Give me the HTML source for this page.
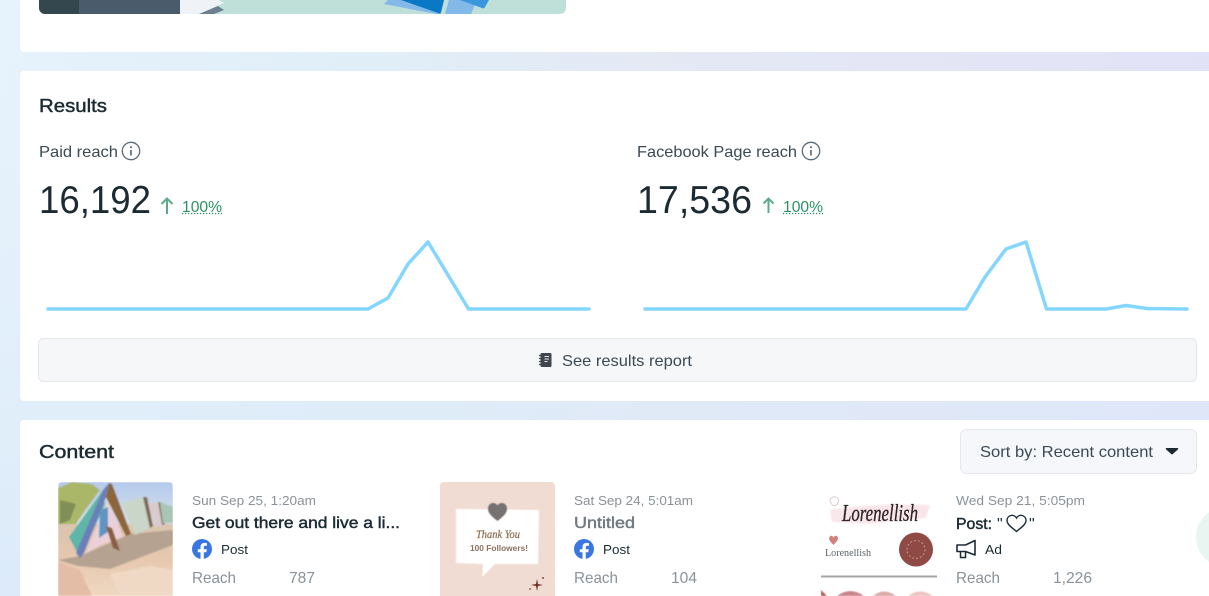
<!DOCTYPE html>
<html lang="en">
<head>
<meta charset="utf-8">
<title>Results</title>
<style>
html,body{margin:0;padding:0;width:1209px;height:596px;overflow:hidden;background:#e4eef8}
svg{display:block;position:absolute;left:0;top:0}
text{font-family:"Liberation Sans",sans-serif;fill:#1c2b33}
.semi{stroke:#1c2b33;stroke-width:.45px}
.g{fill:#8a9299}
.b{fill:#3a4a55}
</style>
</head>
<body>
<svg width="1209" height="596" viewBox="0 0 1209 596" xmlns="http://www.w3.org/2000/svg">
<defs>
<linearGradient id="bg" x1="0" y1="0" x2="1209" y2="0" gradientUnits="userSpaceOnUse">
<stop offset="0" stop-color="#e6f2fc"/><stop offset=".3" stop-color="#e0eef7"/><stop offset=".55" stop-color="#e5e8f4"/><stop offset="1" stop-color="#e2e1f6"/>
</linearGradient>
<linearGradient id="bg2" x1="0" y1="0" x2="0" y2="596" gradientUnits="userSpaceOnUse">
<stop offset="0" stop-color="#e3f2f8" stop-opacity="0"/><stop offset="1" stop-color="#d9e8fa" stop-opacity=".8"/>
</linearGradient>
<linearGradient id="sky" x1="0" y1="0" x2="0" y2="1"><stop offset="0" stop-color="#b4caec"/><stop offset="1" stop-color="#dfe3e6"/></linearGradient>
<linearGradient id="sand" x1="0" y1="0" x2="0" y2="1"><stop offset="0" stop-color="#d9c4ae"/><stop offset=".5" stop-color="#e6c8ae"/><stop offset="1" stop-color="#f0d8c2"/></linearGradient>
<filter id="b1" x="-5%" y="-5%" width="110%" height="110%"><feGaussianBlur stdDeviation=".9"/></filter>
<filter id="b2" x="-5%" y="-5%" width="110%" height="110%"><feGaussianBlur stdDeviation=".4"/></filter>
<clipPath id="c1"><path d="M62 482H169a4 4 0 0 1 4 4V596H58V486a4 4 0 0 1 4-4z"/></clipPath>
<clipPath id="c2"><path d="M444 482H551a4 4 0 0 1 4 4V596H440V486a4 4 0 0 1 4-4z"/></clipPath>
<clipPath id="c0"><path d="M39 -10H566V8a6 6 0 0 1-6 6H45a6 6 0 0 1-6-6z"/></clipPath>
</defs>
<rect width="1209" height="596" fill="url(#bg)"/>
<rect width="1209" height="596" fill="url(#bg2)"/>

<!-- cards -->
<path d="M20 -10H1209V52H24a4 4 0 0 1-4-4z" fill="#fff"/>
<path d="M24 71H1209V401H24a4 4 0 0 1-4-4V75a4 4 0 0 1 4-4z" fill="#fff"/>
<path d="M24 420H1209V596H20V424a4 4 0 0 1 4-4z" fill="#fff"/>

<!-- banner -->
<g clip-path="url(#c0)">
<rect x="39" y="-10" width="527" height="24" fill="#bfe0d9"/>
<rect x="39" y="-10" width="40" height="24" fill="#34474f"/>
<rect x="79" y="-10" width="101" height="24" fill="#4a5b6c"/>
<path d="M180 0H219L224 3 199 14H180z" fill="#eff3f7"/>
<path d="M199 14L218 6 224 10 214 14z" fill="#6f7f8f"/>
<path d="M388 0L384 4 436 14H441L444 0z" fill="#82b9e8"/>
<path d="M449 0H477L471 14H445z" fill="#82b9e8"/>
<path d="M401 0L438 13a2 2 0 0 0 3-1L444 0z" fill="#0a78c4"/>
<path d="M460 0H489L485 7a2 2 0 0 1-3 1z" fill="#3a97dc"/>
</g>

<!-- Results -->
<text x="39" y="112" font-size="18" class="semi" textLength="68" lengthAdjust="spacingAndGlyphs">Results</text>
<text x="39" y="157" font-size="16" class="b" textLength="79" lengthAdjust="spacingAndGlyphs">Paid reach</text>
<circle cx="131" cy="151" r="8.7" fill="none" stroke="#5b6b78" stroke-width="1.3"/>
<rect x="130.2" y="150" width="1.5" height="5.5" fill="#4a5a66"/><circle cx="131" cy="147.3" r="1" fill="#4a5a66"/>
<text x="39" y="213" font-size="39" textLength="112" lengthAdjust="spacingAndGlyphs">16,192</text>
<path d="M167 214V199M161.500 204L167 198.500 172.500 204" fill="none" stroke="#5aab8b" stroke-width="2"/>
<text x="182" y="212" font-size="16" style="fill:#2a9163" textLength="40" lengthAdjust="spacingAndGlyphs">100%</text>
<line x1="182" y1="213.500" x2="222" y2="213.500" stroke="#2a9163" stroke-width="1.300" stroke-dasharray="1.300 1.700"/>

<text x="637" y="157" font-size="16" class="b" textLength="160" lengthAdjust="spacingAndGlyphs">Facebook Page reach</text>
<circle cx="811" cy="151" r="8.700" fill="none" stroke="#5b6b78" stroke-width="1.300"/>
<rect x="810.200" y="150" width="1.500" height="5.500" fill="#4a5a66"/><circle cx="811" cy="147.300" r="1" fill="#4a5a66"/>
<text x="637" y="213" font-size="39" textLength="115" lengthAdjust="spacingAndGlyphs">17,536</text>
<path d="M768.500 213V198.500M763.500 203.500L768.500 198.500 773.500 203.500" fill="none" stroke="#5aab8b" stroke-width="2"/>
<text x="783" y="212" font-size="16" style="fill:#2a9163" textLength="40" lengthAdjust="spacingAndGlyphs">100%</text>
<line x1="783" y1="213.500" x2="823" y2="213.500" stroke="#2a9163" stroke-width="1.300" stroke-dasharray="1.300 1.700"/>

<!-- charts -->
<polyline points="48,309 368,309 388,298 408,264 428,242 468.500,309 589,309" fill="none" stroke="#85d6ff" stroke-width="3.500" stroke-linecap="round" stroke-linejoin="round"/>
<polyline points="645,309 966,309 985,277 1006,249 1026,242 1046.500,309 1106,309 1126,305.500 1147,308.500 1187,309" fill="none" stroke="#85d6ff" stroke-width="3.500" stroke-linecap="round" stroke-linejoin="round"/>

<!-- report button -->
<rect x="38.500" y="338.500" width="1158" height="43" rx="5" fill="#f6f7f9" stroke="#e3e6ea"/>
<rect x="540.500" y="353" width="11" height="14" rx="1.500" fill="#3f4650"/>
<path d="M539 355.500h3M539 358.500h3M539 361.500h3M539 364.500h3" stroke="#3f4650" stroke-width="1.200"/>
<path d="M544.500 356.500h4.500M544.500 359h4.500M544.500 361.500h3" stroke="#e8eaee" stroke-width=".9"/>
<text x="562" y="366" font-size="16" class="b" textLength="130" lengthAdjust="spacingAndGlyphs">See results report</text>

<!-- Content -->
<text x="39" y="458" font-size="18" class="semi" textLength="75" lengthAdjust="spacingAndGlyphs">Content</text>
<rect x="960.500" y="429.500" width="236" height="44" rx="6" fill="#f5f7fa" stroke="#e4e7eb"/>
<text x="980" y="457" font-size="16" class="b" textLength="173" lengthAdjust="spacingAndGlyphs">Sort by: Recent content</text>
<path d="M1165.500 448h12a.8.8 0 0 1 .6 1.300l-5.400 4.800a1 1 0 0 1-1.400 0l-5.400-4.800a.8.8 0 0 1 .6-1.300z" fill="#1c2b33"/>

<!-- thumb 1 -->
<g clip-path="url(#c1)"><g filter="url(#b1)">
<rect x="58" y="482" width="115" height="50" fill="url(#sky)"/>
<path d="M58 488L72 482 92 484 100 490 84 512 72 530 58 530z" fill="#aab768"/>
<path d="M60 500L76 504 70 520 60 524z" fill="#7f8f55"/>
<rect x="58" y="524" width="115" height="72" fill="url(#sand)"/>
<path d="M58 560L78 566 110 569 173 545V530L130 534 80 556z" fill="#b5a291"/>
<path d="M110 574L150 566 173 570V596H120z" fill="#efd9c4"/>
<path d="M58 562L80 570 92 596H58z" fill="#e3bda6"/>
<path d="M122 503L143 497 150 528 135 535z" fill="#c9d6c8"/>
<path d="M143 497L147 497 153 526 150 528z" fill="#7d6a55"/>
<path d="M148 503L158 502 162 525 155 528z" fill="#d8cccf"/>
<path d="M158 502L160 502 165 524 162 525z" fill="#8c7a68"/>
<path d="M160 502L173 507V523H163z" fill="#a9c5b5"/>
<path d="M103 490L69 537 80 558 105 505z" fill="#5fb5a8"/>
<path d="M108 500L123 537 100 545 86 553z" fill="#ecd0d8"/>
<path d="M100 510L108 507 108 532 99 538z" fill="#5f94c4"/>
<path d="M109 483L112 484 131 534 126 536 106 497z" fill="#8c6538"/>
<path d="M109 483L106 497 84 553 80 558 76 553 103 490z" fill="#6a7fb8"/>
<path d="M106 526L112 528 120 551 113 548z" fill="#8a5d40"/>
</g></g>

<!-- thumb 2 -->
<g clip-path="url(#c2)">
<rect x="440" y="482" width="115" height="114" fill="#f0dcd2"/>
<path d="M456 509L539 510 538 564 495 564 482 577 483 564 456 563z" fill="#fff" filter="url(#b2)"/>
<path d="M488 509C488 501 497 502 497.500 506 498 502 507 501 507 509 507 514 501 518 497.500 521 494 518 488 514 488 509z" fill="#767271" filter="url(#b2)"/>
<text x="476" y="538" font-size="11.500" font-style="italic" class="semi" style="fill:#8f7050;stroke:#8f7050;stroke-width:.25px;font-family:'Liberation Serif',serif" textLength="44" lengthAdjust="spacingAndGlyphs">Thank You</text>
<text x="470" y="551" font-size="8" font-weight="700" style="fill:#8a7260" textLength="58" lengthAdjust="spacingAndGlyphs">100 Followers!</text>
<path d="M537 579L538 584 543 585 538 586 537 591 536 586 531 585 536 584z" fill="#6e3326"/>
<circle cx="543" cy="578" r="1" fill="#8a4a3a"/><circle cx="530" cy="589" r=".9" fill="#8a4a3a"/>
</g>

<!-- thumb 3 -->
<g>
<path d="M830 510Q870 503 930 505L926 518 870 524 832 522z" fill="#fae6ea" filter="url(#b1)"/>
<path d="M830 499C834 495 840 497 838 503 835 508 830 505 830 499z" fill="none" stroke="#d9c5c5" stroke-width=".8"/>
<text x="842" y="521" font-size="24" font-style="italic" class="semi" style="stroke-width:.3px;fill:#2a2526;stroke:#2a2526;font-family:'Liberation Serif',serif" textLength="76" lengthAdjust="spacingAndGlyphs">Lorenellish</text>
<path d="M829 538c1-3 4-3 4.500 0 .5-3 4-3 4.500 0 0 3-3 5-4.500 7-1.500-2-4.500-4-4.500-7z" fill="#d27f80"/>
<text x="825" y="556" font-size="11" style="fill:#5a6468;font-family:'Liberation Serif',serif" textLength="46" lengthAdjust="spacingAndGlyphs">Lorenellish</text>
<circle cx="916" cy="549.500" r="17" fill="#8f4a45"/>
<circle cx="916" cy="549.500" r="9" fill="none" stroke="#b98a80" stroke-width="1.200" stroke-dasharray="2 2"/>
<rect x="821" y="575.500" width="116" height="2" fill="#a5a5a5"/>
<path d="M821 590L827 596H821z" fill="#b5605f" filter="url(#b2)"/>
<path d="M837 596Q850 586 864 596z" fill="#c9878c" filter="url(#b2)"/>
<path d="M873 596Q884 587 896 596z" fill="#dcaaa9" filter="url(#b2)"/>
<path d="M908 596Q920 587 933 596z" fill="#ecc4c0" filter="url(#b2)"/>
</g>

<!-- item 1 -->
<text x="192" y="505" font-size="13" class="g" textLength="124" lengthAdjust="spacingAndGlyphs">Sun Sep 25, 1:20am</text>
<text x="192" y="528" font-size="16" class="semi" textLength="208" lengthAdjust="spacingAndGlyphs">Get out there and live a li...</text>
<circle cx="202" cy="549" r="10" fill="#3a76e2"/>
<path d="M203.800 559V552.300H206.300L206.800 549.200H203.800V547.300C203.800 546.300 204.300 545.700 205.400 545.700H206.900V543.100C206.300 543 205.300 542.900 204.500 542.900 202 542.900 200.500 544.400 200.500 546.900V549.200H197.800V552.300H200.500V559z" fill="#fff"/>
<text x="221" y="554" font-size="13" textLength="27" lengthAdjust="spacingAndGlyphs">Post</text>
<text x="192" y="583" font-size="16" class="g" textLength="44" lengthAdjust="spacingAndGlyphs">Reach</text>
<text x="289" y="583" font-size="16" class="g" textLength="26" lengthAdjust="spacingAndGlyphs">787</text>

<!-- item 2 -->
<text x="574" y="505" font-size="13" class="g" textLength="119" lengthAdjust="spacingAndGlyphs">Sat Sep 24, 5:01am</text>
<text x="574" y="528" font-size="16" class="semi" style="fill:#727a82;stroke:#727a82" textLength="61" lengthAdjust="spacingAndGlyphs">Untitled</text>
<circle cx="584" cy="549" r="10" fill="#3a76e2"/>
<path d="M585.800 559V552.300H588.300L588.800 549.200H585.800V547.300C585.800 546.300 586.300 545.700 587.400 545.700H588.900V543.100C588.300 543 587.300 542.900 586.500 542.900 584 542.900 582.500 544.400 582.500 546.900V549.200H579.800V552.300H582.500V559z" fill="#fff"/>
<text x="603" y="554" font-size="13" textLength="27" lengthAdjust="spacingAndGlyphs">Post</text>
<text x="574" y="583" font-size="16" class="g" textLength="44" lengthAdjust="spacingAndGlyphs">Reach</text>
<text x="671" y="583" font-size="16" class="g" textLength="26" lengthAdjust="spacingAndGlyphs">104</text>

<!-- item 3 -->
<text x="956" y="505" font-size="13" class="g" textLength="129" lengthAdjust="spacingAndGlyphs">Wed Sep 21, 5:05pm</text>
<text x="956" y="529" font-size="16" class="semi" textLength="36" lengthAdjust="spacingAndGlyphs">Post:</text>
<text x="997" y="529" font-size="16">"</text>
<path d="M1016.500 531.500C1012.500 528 1007 524.500 1007 520.500 1007 515 1014 513.500 1016.500 518 1019 513.500 1026 515 1026 520.500 1026 524.500 1020.500 528 1016.500 531.500z" fill="none" stroke="#1c2b33" stroke-width="1.400"/>
<text x="1029" y="529" font-size="16">"</text>
<path d="M975 540.500V555L965.500 551.500H957V545H965.500z" fill="none" stroke="#1c2b33" stroke-width="1.600" stroke-linejoin="round"/>
<path d="M960.500 552V557.500H965.500V552" fill="none" stroke="#1c2b33" stroke-width="1.500"/>
<text x="985" y="554" font-size="13" textLength="17" lengthAdjust="spacingAndGlyphs">Ad</text>
<text x="956" y="583" font-size="16" class="g" textLength="44" lengthAdjust="spacingAndGlyphs">Reach</text>
<text x="1053" y="583" font-size="16" class="g" textLength="39" lengthAdjust="spacingAndGlyphs">1,226</text>

<!-- floating bubble -->
<circle cx="1226" cy="537" r="30" fill="#e8f5f0"/>
</svg>
</body>
</html>
